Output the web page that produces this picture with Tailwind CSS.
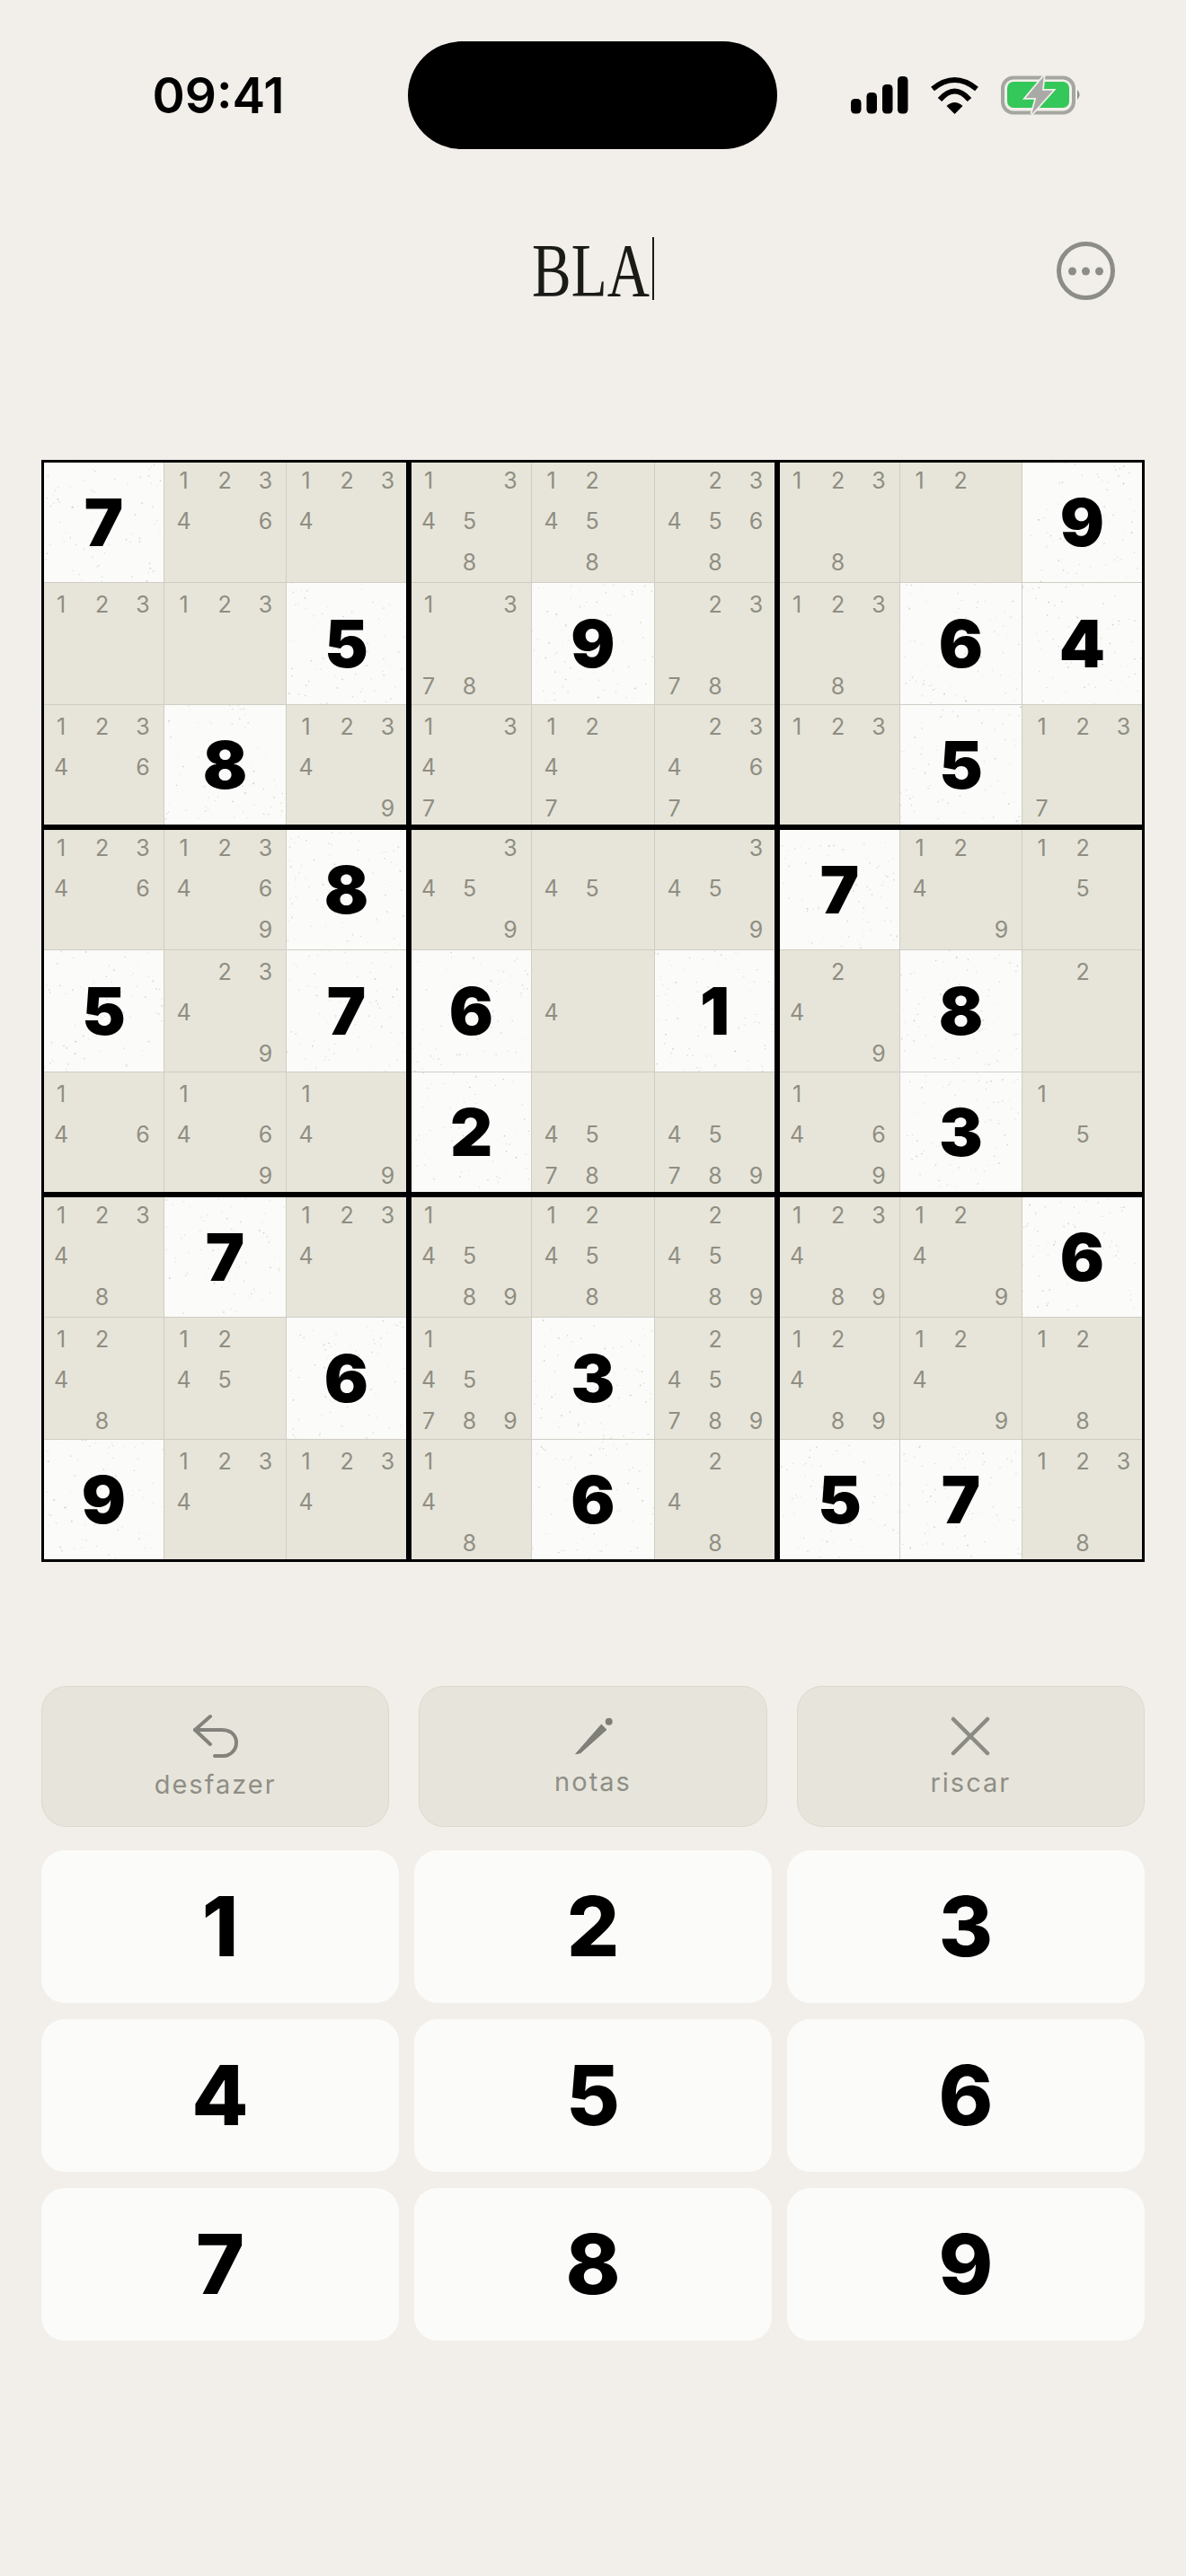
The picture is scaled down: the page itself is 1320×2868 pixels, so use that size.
<!DOCTYPE html>
<html lang="pt">
<head>
    <meta charset="UTF-8">
    <meta name="viewport" content="width=device-width, initial-scale=1.0">
    <title>Sudoku</title>
    <script src="https://cdn.jsdelivr.net/npm/@tailwindcss/browser@4"></script>
</head>
<body class="bg-[#f2efea] font-[family-name:Inter] h-[2868px] overflow-hidden">

<!-- status bar -->
<div class="grid grid-cols-[454px_411px_455px] pt-[46px]">
    <div class="flex items-center justify-center pl-[32px] text-[55px] font-semibold text-black">09:41</div>
    <div class="h-[120px] rounded-full bg-black"></div>
    <div class="flex items-center gap-[24px] pl-[82px]">
        <svg width="64" height="42" viewBox="0 0 64 42" fill="#000">
            <rect x="0" y="25" width="11.5" height="16.5" rx="4.5"/>
            <rect x="17.5" y="18" width="11.5" height="23.5" rx="4.5"/>
            <rect x="35" y="9" width="11.5" height="32.5" rx="4.5"/>
            <rect x="52" y="0" width="11.5" height="41.5" rx="4.5"/>
        </svg>
        <svg width="55" height="42" viewBox="0 0 55 42" fill="none">
            <path d="M3 14 Q27.5 -6 52 14" stroke="#000" stroke-width="6"/>
            <path d="M11 26 Q27.5 7 44 26" stroke="#000" stroke-width="6"/>
            <path d="M18.5 33 Q27.5 25 36.5 33 L27.5 42 Z" fill="#000"/>
        </svg>
        <svg width="90" height="44" viewBox="0 0 90 44" fill="none">
            <rect x="2" y="2.5" width="79" height="39" rx="12" stroke="#a6a6a1" stroke-width="4"/>
            <rect x="7" y="7" width="69" height="29" rx="7" fill="#34c759"/>
            <path d="M85 16 Q90 21.5 85 27 Z" fill="#8f8f8a"/>
            <path d="M47.7 1 L27.7 25 H39.3 L34.3 43 L57.7 16.7 H46 Z" fill="#a9a9a5" stroke="#f2efea" stroke-width="3.5" paint-order="stroke"/>
        </svg>
    </div>
</div>

<!-- header -->
<div class="grid grid-cols-[1fr_auto_1fr] items-end mt-[97px] px-[46px] h-[71px]">
    <div></div>
    <div class="flex items-end w-[136px] h-[71px]">
        <span class="shrink-0 w-[131px] origin-left scale-x-[.77] whitespace-nowrap text-[85px] leading-[65px] text-[#1a1a17] font-[family-name:'Liberation_Serif',serif]">BLA</span>
        <span class="shrink-0 w-[1.5px] h-[70px] ml-[3px] bg-[#1a1a17]"></span>
    </div>
    <div class="flex justify-end pr-[33px]">
        <svg width="65" height="65" viewBox="0 0 65 65" fill="#8d8d88">
            <circle cx="32.5" cy="32.5" r="30" fill="none" stroke="#8d8d88" stroke-width="5"/>
            <circle cx="17.5" cy="33" r="4.5"/>
            <circle cx="32.5" cy="33" r="4.5"/>
            <circle cx="47.5" cy="33" r="4.5"/>
        </svg>
    </div>
</div>

<!-- board -->
<div id="board" class="grid grid-cols-[403px_404px_403px] grid-rows-[403px_403px_403px] gap-[6px] mt-[178px] mx-[46px] w-[1228px] border-[3px] border-black bg-black"></div>

<!-- actions -->
<div class="grid grid-cols-3 gap-[33px] mt-[138px] mx-[46px] text-[#8f8e87]">
    <button class="flex flex-col items-center h-[157px] pt-[30px] rounded-[28px] border border-[#dcd9ce] bg-[#e7e5db]">
        <svg width="50" height="50" viewBox="0 0 50 50" fill="none" stroke="#83827c" stroke-width="4" stroke-linecap="round" stroke-linejoin="round">
            <path d="M19 3 L2 18 L19 34"/>
            <path d="M2 18 H32 C43 18 48 25 48 32 C48 41 41 47 33 47 H24"/>
        </svg>
        <span class="mt-[12px] text-[29px] leading-[34px] tracking-[2px]">desfazer</span>
    </button>
    <button class="flex flex-col items-center h-[157px] pt-[34px] rounded-[28px] border border-[#dcd9ce] bg-[#e7e5db]">
        <svg width="46" height="46" viewBox="0 0 46 46" fill="#7f7e78">
            <path d="M3.7 40.7 L32.3 8 L38 13.7 L9 39.7 Z" stroke="#7f7e78" stroke-linejoin="round"/>
            <circle cx="40.7" cy="4.7" r="4"/>
        </svg>
        <span class="mt-[9px] text-[29px] leading-[34px] tracking-[2px]">notas</span>
    </button>
    <button class="flex flex-col items-center h-[157px] pt-[33px] rounded-[28px] border border-[#dcd9ce] bg-[#e7e5db]">
        <svg width="44" height="44" viewBox="0 0 44 44" fill="none" stroke="#8b8a84" stroke-width="4.5" stroke-linecap="round">
            <path d="M3 3 L41 41"/>
            <path d="M41 3 L3 41"/>
        </svg>
        <span class="mt-[13px] text-[29px] leading-[34px] tracking-[2px]">riscar</span>
    </button>
</div>

<!-- number keys -->
<div class="grid grid-cols-3 gap-x-[17px] gap-y-[18px] mt-[26px] mx-[46px] text-[92px] font-[760] text-black">
    <button class="flex items-center justify-center h-[170px] rounded-[26px] bg-[#fbfbf9]">1</button>
    <button class="flex items-center justify-center h-[170px] rounded-[26px] bg-[#fbfbf9]">2</button>
    <button class="flex items-center justify-center h-[170px] rounded-[26px] bg-[#fbfbf9]">3</button>
    <button class="flex items-center justify-center h-[170px] rounded-[26px] bg-[#fbfbf9]">4</button>
    <button class="flex items-center justify-center h-[170px] rounded-[26px] bg-[#fbfbf9]">5</button>
    <button class="flex items-center justify-center h-[170px] rounded-[26px] bg-[#fbfbf9]">6</button>
    <button class="flex items-center justify-center h-[170px] rounded-[26px] bg-[#fbfbf9]">7</button>
    <button class="flex items-center justify-center h-[170px] rounded-[26px] bg-[#fbfbf9]">8</button>
    <button class="flex items-center justify-center h-[170px] rounded-[26px] bg-[#fbfbf9]">9</button>
</div>

<script>
    // "=7" is a placed digit, anything else is the list of pencil notes
    const puzzle = [
        ['=7', '12346', '1234', '13458', '12458', '234568', '1238', '12', '=9'],
        ['123', '123', '=5', '1378', '=9', '2378', '1238', '=6', '=4'],
        ['12346', '=8', '12349', '1347', '1247', '23467', '123', '=5', '1237'],
        ['12346', '123469', '=8', '3459', '45', '3459', '=7', '1249', '125'],
        ['=5', '2349', '=7', '=6', '4', '=1', '249', '=8', '2'],
        ['146', '1469', '149', '=2', '4578', '45789', '1469', '=3', '15'],
        ['12348', '=7', '1234', '14589', '12458', '24589', '123489', '1249', '=6'],
        ['1248', '1245', '=6', '145789', '=3', '245789', '12489', '1249', '128'],
        ['=9', '1234', '1234', '148', '=6', '248', '=5', '=7', '1238']
    ];
    const padLeft = ['pl-[4px]', 'pl-[6.5px]', 'pl-[6.5px]'];
    const padTop = ['pt-[4.5px]', 'pt-[8.5px]', 'pt-[8.5px]'];

    let seed = 7;
    function rnd() {
        seed = (seed * 16807) % 2147483647;
        return seed / 2147483647;
    }

    function speckles() {
        let dots = '';
        for (let i = 0; i < 90; i++) {
            const r = (0.35 + rnd() * 0.6).toFixed(2);
            dots += `<circle cx="${(rnd() * 136).toFixed(1)}" cy="${(rnd() * 136).toFixed(1)}" r="${r}" fill="#adaca2" opacity="${(0.25 + rnd() * 0.35).toFixed(2)}"/>`;
        }
        return `<svg class="absolute inset-0 w-full h-full" viewBox="0 0 136 136" preserveAspectRatio="none">${dots}</svg>`;
    }

    function cellHtml(value, row, col) {
        if (value[0] === '=') {
            return `<div class="relative flex items-center justify-center bg-[#fbfbf9] text-[73px] font-black text-black">${speckles()}<span class="relative">${value[1]}</span></div>`;
        }
        let notes = '';
        for (let n = 1; n <= 9; n++) {
            notes += `<span class="text-center">${value.includes(String(n)) ? n : ''}</span>`;
        }
        return `<div class="bg-[#e7e5da] ${padLeft[col]} ${padTop[row]}"><div class="grid grid-cols-[30px_30px_30px] grid-rows-[30px_30px_30px] gap-[15.5px] text-[25px] leading-[30px] text-[#8f8e82]">${notes}</div></div>`;
    }

    let html = '';
    for (let b = 0; b < 9; b++) {
        const top = Math.floor(b / 3) * 3, left = (b % 3) * 3;
        html += '<div class="grid grid-cols-[133px_1fr_133px] grid-rows-[133px_1fr_133px] gap-px bg-[#cfcdc4]">';
        for (let r = 0; r < 3; r++) {
            for (let c = 0; c < 3; c++) {
                html += cellHtml(puzzle[top + r][left + c], r, c);
            }
        }
        html += '</div>';
    }
    document.getElementById('board').innerHTML = html;
</script>
</body>
</html>
